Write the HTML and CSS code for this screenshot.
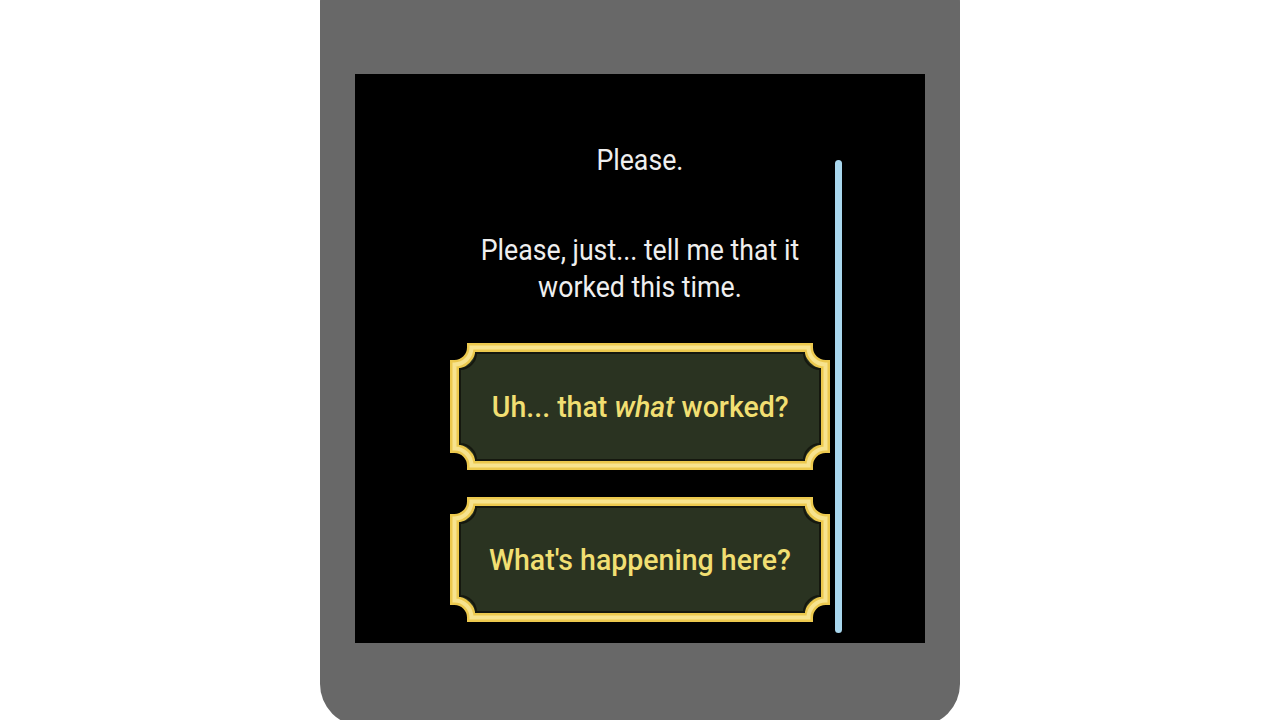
FILE: index.html
```html
<!DOCTYPE html>
<html>
<head>
<meta charset="utf-8">
<link rel="stylesheet" href="styles.css">
</head>
<body>
<div class="device">
  <div class="screen">
    <div class="content">
      <p class="line first"><span class="sq">Please.</span></p>
      <p class="line second"><span class="sq">Please, just... tell me that it<br>worked this time.</span></p>
      <div class="choice c1">
        <svg class="frame" viewBox="0 0 380 127" preserveAspectRatio="none">
          <path class="band" d="M21.5 4.5 H358.5 A17 17 0 0 0 375.5 21.5 V105.5 A17 17 0 0 0 358.5 122.5 H21.5 A17 17 0 0 0 4.5 105.5 V21.5 A17 17 0 0 0 21.5 4.5 Z"/>
          <path class="hi" d="M21.5 4.5 H358.5 A17 17 0 0 0 375.5 21.5 V105.5 A17 17 0 0 0 358.5 122.5 H21.5 A17 17 0 0 0 4.5 105.5 V21.5 A17 17 0 0 0 21.5 4.5 Z"/>
          <path class="inner" d="M26 10 H354 A16 16 0 0 0 370 26 V101 A16 16 0 0 0 354 117 H26 A16 16 0 0 0 10 101 V26 A16 16 0 0 0 26 10 Z"/>
        </svg>
        <span class="label sq2">Uh... that <em>what</em> worked?</span>
      </div>
      <div class="choice c2">
        <svg class="frame" viewBox="0 0 380 125" preserveAspectRatio="none">
          <path class="band" d="M21.5 4.5 H358.5 A17 17 0 0 0 375.5 21.5 V103.5 A17 17 0 0 0 358.5 120.5 H21.5 A17 17 0 0 0 4.5 103.5 V21.5 A17 17 0 0 0 21.5 4.5 Z"/>
          <path class="hi" d="M21.5 4.5 H358.5 A17 17 0 0 0 375.5 21.5 V103.5 A17 17 0 0 0 358.5 120.5 H21.5 A17 17 0 0 0 4.5 103.5 V21.5 A17 17 0 0 0 21.5 4.5 Z"/>
          <path class="inner" d="M26 10 H354 A16 16 0 0 0 370 26 V99 A16 16 0 0 0 354 115 H26 A16 16 0 0 0 10 99 V26 A16 16 0 0 0 26 10 Z"/>
        </svg>
        <span class="label sq2">What's happening here?</span>
      </div>
    </div>
    <div class="scrollbar"></div>
  </div>
</div>
</body>
</html>
```
FILE: styles.css
```css
html, body {
  margin: 0;
  padding: 0;
  background: #ffffff;
  overflow: hidden;
}
body {
  width: 1280px;
  height: 720px;
}
.device {
  width: 640px;
  height: 766px;
  margin: -40px auto 0;
  background: #686868;
  border-radius: 42px;
  padding-top: 114px;
  box-sizing: border-box;
}
.screen {
  position: relative;
  width: 570px;
  height: 569px;
  margin: 0 auto;
  background: #000000;
  overflow: hidden;
}
.content {
  display: flex;
  flex-direction: column;
  align-items: center;
  padding-top: 67px;
}
.line {
  margin: 0;
  color: #efefef;
  font-family: Roboto, "Liberation Sans", sans-serif;
  font-size: 30px;
  line-height: 37px;
  text-align: center;
  width: 420px;
}
.sq {
  display: inline-block;
  transform: scaleX(0.89);
  transform-origin: center;
}
.sq2 {
  display: inline-block;
  transform: scaleX(0.95);
  transform-origin: center;
}
.second {
  margin-top: 53px;
}
.choice {
  position: relative;
  width: 380px;
  height: 127px;
  display: flex;
  align-items: center;
  justify-content: center;
  margin-top: 38px;
}
.c2 {
  height: 125px;
  margin-top: 27px;
}
.frame {
  position: absolute;
  left: 0;
  top: 0;
  width: 100%;
  height: 100%;
}
.band {
  fill: #2a3321;
  stroke: #ecc94e;
  stroke-width: 9;
}
.hi {
  fill: none;
  stroke: #f7e38e;
  stroke-width: 4;
}
.inner {
  fill: #2a3321;
  stroke: #15180f;
  stroke-width: 2;
}
.label {
  position: relative;
  color: #f1df72;
  font-family: Roboto, "Liberation Sans", sans-serif;
  font-weight: 500;
  font-size: 30px;
  white-space: nowrap;
}
.label em {
  font-style: italic;
}
.scrollbar {
  position: absolute;
  left: 480px;
  top: 86px;
  width: 7px;
  height: 473px;
  border-radius: 4px;
  background: #a9d7ee;
}
```
